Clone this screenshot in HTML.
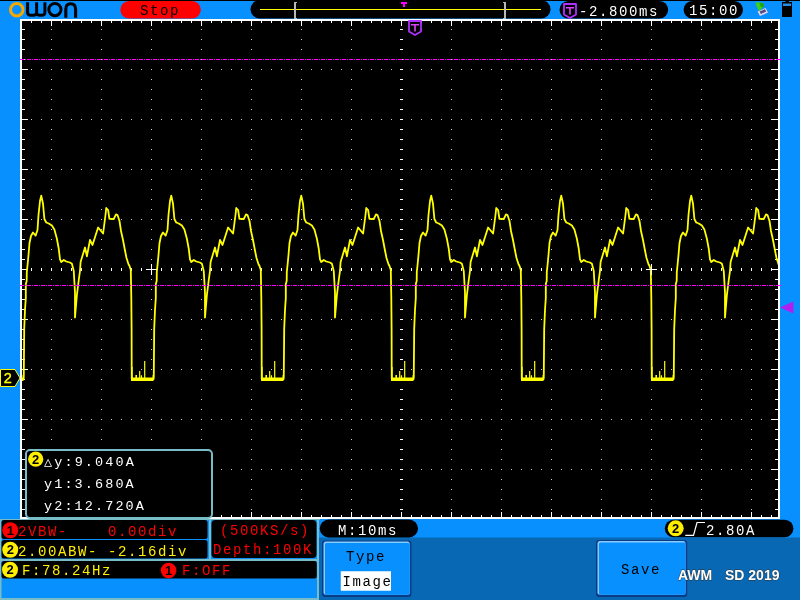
<!DOCTYPE html>
<html><head><meta charset="utf-8"><style>
html,body{margin:0;padding:0;background:#0890ff;width:800px;height:600px;overflow:hidden}
svg{position:absolute;left:0;top:0;display:block;will-change:transform}
text{font-family:"Liberation Mono",monospace;white-space:pre}
</style></head><body>
<svg width="800" height="600" viewBox="0 0 800 600">
<rect x="0" y="0" width="800" height="1" fill="#000"/>
<circle cx="16.75" cy="9.75" r="6.25" fill="none" stroke="#f5a800" stroke-width="3"/>
<path d="M27.6 2.3V12.6Q27.6 15.2 30.2 15.2H34Q36.6 15.2 36.6 12.6V2.3M36.6 12.6Q36.6 15.2 39.2 15.2H42.3Q44.9 15.2 44.9 12.6V2.3" fill="none" stroke="#000" stroke-width="3"/>
<circle cx="54.9" cy="9.6" r="6.1" fill="none" stroke="#000" stroke-width="3"/>
<path d="M65.8 17.7V9.5Q65.8 3.8 70.7 3.8Q75.6 3.8 75.6 9.5V17.7" fill="none" stroke="#000" stroke-width="3.1"/>
<rect x="120.3" y="1" width="80.5" height="17.5" rx="8.75" fill="#ff0000"/>
<text x="140" y="15" fill="#000" font-size="14" letter-spacing="1.6" >Stop</text>
<rect x="250.5" y="0" width="300" height="18.5" rx="9.25" fill="#000"/>
<rect x="260" y="9" width="281" height="1" fill="#ff0"/>
<path d="M294 2h3v1h-1v15h1v1h-3z" fill="#b8b8b8"/>
<path d="M506 2h-3v1h1v15h-1v1h3z" fill="#b8b8b8"/>
<path d="M401 2h6v2h-2v3h-2v-3h-2z" fill="#ff00ff"/>
<rect x="559.5" y="1" width="108.7" height="17.5" rx="8.75" fill="#000"/>
<path d="M564 4h12v10.5l-6 3.5l-6 -3.5z" fill="#000" stroke="#b030ff" stroke-width="1.8" stroke-linejoin="round"/><path d="M566 7h8v1.6h-3.2v6h-1.6v-6h-3.2z" fill="#e040ff"/>
<text x="579" y="16" fill="#fff" font-size="14" letter-spacing="1.6" >-2.800ms</text>
<rect x="683.6" y="1" width="59.4" height="17.5" rx="8.75" fill="#000"/>
<text x="689" y="15" fill="#fff" font-size="14" letter-spacing="1.6" >15:00</text>
<path d="M757.6 11.6L765.6 7.9L768 12.5L760 16Z" fill="#e0d8e8"/><path d="M759.6 11.6L765 9.3L766.2 11.6L760.8 14Z" fill="#584a80"/>
<path d="M755.4 2.2L763 2.8L764 6.6L761.6 8.2L760.2 10.8L758.4 10.2L756.6 6.2Z" fill="#3cd018"/><path d="M759.5 3.2L763.2 3L764 6.6L761.2 7.6Z" fill="#20a010"/>
<rect x="782" y="2" width="10" height="15" fill="#000"/><rect x="785.5" y="0" width="3.5" height="2" fill="#000"/><rect x="783" y="3.5" width="8" height="2.5" fill="#2a8ee0"/>
<rect x="20" y="19" width="760" height="500" fill="#fff"/>
<rect x="22" y="21" width="756" height="496" fill="#000"/>
<path shape-rendering="crispEdges" fill="#d0d0d0" d="M51 29h1v1h-1zM51 39h1v1h-1zM51 49h1v1h-1zM51 59h1v1h-1zM51 69h1v1h-1zM51 79h1v1h-1zM51 89h1v1h-1zM51 99h1v1h-1zM51 109h1v1h-1zM51 119h1v1h-1zM51 129h1v1h-1zM51 139h1v1h-1zM51 149h1v1h-1zM51 159h1v1h-1zM51 169h1v1h-1zM51 179h1v1h-1zM51 189h1v1h-1zM51 199h1v1h-1zM51 209h1v1h-1zM51 219h1v1h-1zM51 229h1v1h-1zM51 239h1v1h-1zM51 249h1v1h-1zM51 259h1v1h-1zM51 269h1v1h-1zM51 279h1v1h-1zM51 289h1v1h-1zM51 299h1v1h-1zM51 309h1v1h-1zM51 319h1v1h-1zM51 329h1v1h-1zM51 339h1v1h-1zM51 349h1v1h-1zM51 359h1v1h-1zM51 369h1v1h-1zM51 379h1v1h-1zM51 389h1v1h-1zM51 399h1v1h-1zM51 409h1v1h-1zM51 419h1v1h-1zM51 429h1v1h-1zM51 439h1v1h-1zM51 449h1v1h-1zM51 459h1v1h-1zM51 469h1v1h-1zM51 479h1v1h-1zM51 489h1v1h-1zM51 499h1v1h-1zM51 509h1v1h-1zM101 29h1v1h-1zM101 39h1v1h-1zM101 49h1v1h-1zM101 59h1v1h-1zM101 69h1v1h-1zM101 79h1v1h-1zM101 89h1v1h-1zM101 99h1v1h-1zM101 109h1v1h-1zM101 119h1v1h-1zM101 129h1v1h-1zM101 139h1v1h-1zM101 149h1v1h-1zM101 159h1v1h-1zM101 169h1v1h-1zM101 179h1v1h-1zM101 189h1v1h-1zM101 199h1v1h-1zM101 209h1v1h-1zM101 219h1v1h-1zM101 229h1v1h-1zM101 239h1v1h-1zM101 249h1v1h-1zM101 259h1v1h-1zM101 269h1v1h-1zM101 279h1v1h-1zM101 289h1v1h-1zM101 299h1v1h-1zM101 309h1v1h-1zM101 319h1v1h-1zM101 329h1v1h-1zM101 339h1v1h-1zM101 349h1v1h-1zM101 359h1v1h-1zM101 369h1v1h-1zM101 379h1v1h-1zM101 389h1v1h-1zM101 399h1v1h-1zM101 409h1v1h-1zM101 419h1v1h-1zM101 429h1v1h-1zM101 439h1v1h-1zM101 449h1v1h-1zM101 459h1v1h-1zM101 469h1v1h-1zM101 479h1v1h-1zM101 489h1v1h-1zM101 499h1v1h-1zM101 509h1v1h-1zM151 29h1v1h-1zM151 39h1v1h-1zM151 49h1v1h-1zM151 59h1v1h-1zM151 69h1v1h-1zM151 79h1v1h-1zM151 89h1v1h-1zM151 99h1v1h-1zM151 109h1v1h-1zM151 119h1v1h-1zM151 129h1v1h-1zM151 139h1v1h-1zM151 149h1v1h-1zM151 159h1v1h-1zM151 169h1v1h-1zM151 179h1v1h-1zM151 189h1v1h-1zM151 199h1v1h-1zM151 209h1v1h-1zM151 219h1v1h-1zM151 229h1v1h-1zM151 239h1v1h-1zM151 249h1v1h-1zM151 259h1v1h-1zM151 269h1v1h-1zM151 279h1v1h-1zM151 289h1v1h-1zM151 299h1v1h-1zM151 309h1v1h-1zM151 319h1v1h-1zM151 329h1v1h-1zM151 339h1v1h-1zM151 349h1v1h-1zM151 359h1v1h-1zM151 369h1v1h-1zM151 379h1v1h-1zM151 389h1v1h-1zM151 399h1v1h-1zM151 409h1v1h-1zM151 419h1v1h-1zM151 429h1v1h-1zM151 439h1v1h-1zM151 449h1v1h-1zM151 459h1v1h-1zM151 469h1v1h-1zM151 479h1v1h-1zM151 489h1v1h-1zM151 499h1v1h-1zM151 509h1v1h-1zM201 29h1v1h-1zM201 39h1v1h-1zM201 49h1v1h-1zM201 59h1v1h-1zM201 69h1v1h-1zM201 79h1v1h-1zM201 89h1v1h-1zM201 99h1v1h-1zM201 109h1v1h-1zM201 119h1v1h-1zM201 129h1v1h-1zM201 139h1v1h-1zM201 149h1v1h-1zM201 159h1v1h-1zM201 169h1v1h-1zM201 179h1v1h-1zM201 189h1v1h-1zM201 199h1v1h-1zM201 209h1v1h-1zM201 219h1v1h-1zM201 229h1v1h-1zM201 239h1v1h-1zM201 249h1v1h-1zM201 259h1v1h-1zM201 269h1v1h-1zM201 279h1v1h-1zM201 289h1v1h-1zM201 299h1v1h-1zM201 309h1v1h-1zM201 319h1v1h-1zM201 329h1v1h-1zM201 339h1v1h-1zM201 349h1v1h-1zM201 359h1v1h-1zM201 369h1v1h-1zM201 379h1v1h-1zM201 389h1v1h-1zM201 399h1v1h-1zM201 409h1v1h-1zM201 419h1v1h-1zM201 429h1v1h-1zM201 439h1v1h-1zM201 449h1v1h-1zM201 459h1v1h-1zM201 469h1v1h-1zM201 479h1v1h-1zM201 489h1v1h-1zM201 499h1v1h-1zM201 509h1v1h-1zM251 29h1v1h-1zM251 39h1v1h-1zM251 49h1v1h-1zM251 59h1v1h-1zM251 69h1v1h-1zM251 79h1v1h-1zM251 89h1v1h-1zM251 99h1v1h-1zM251 109h1v1h-1zM251 119h1v1h-1zM251 129h1v1h-1zM251 139h1v1h-1zM251 149h1v1h-1zM251 159h1v1h-1zM251 169h1v1h-1zM251 179h1v1h-1zM251 189h1v1h-1zM251 199h1v1h-1zM251 209h1v1h-1zM251 219h1v1h-1zM251 229h1v1h-1zM251 239h1v1h-1zM251 249h1v1h-1zM251 259h1v1h-1zM251 269h1v1h-1zM251 279h1v1h-1zM251 289h1v1h-1zM251 299h1v1h-1zM251 309h1v1h-1zM251 319h1v1h-1zM251 329h1v1h-1zM251 339h1v1h-1zM251 349h1v1h-1zM251 359h1v1h-1zM251 369h1v1h-1zM251 379h1v1h-1zM251 389h1v1h-1zM251 399h1v1h-1zM251 409h1v1h-1zM251 419h1v1h-1zM251 429h1v1h-1zM251 439h1v1h-1zM251 449h1v1h-1zM251 459h1v1h-1zM251 469h1v1h-1zM251 479h1v1h-1zM251 489h1v1h-1zM251 499h1v1h-1zM251 509h1v1h-1zM301 29h1v1h-1zM301 39h1v1h-1zM301 49h1v1h-1zM301 59h1v1h-1zM301 69h1v1h-1zM301 79h1v1h-1zM301 89h1v1h-1zM301 99h1v1h-1zM301 109h1v1h-1zM301 119h1v1h-1zM301 129h1v1h-1zM301 139h1v1h-1zM301 149h1v1h-1zM301 159h1v1h-1zM301 169h1v1h-1zM301 179h1v1h-1zM301 189h1v1h-1zM301 199h1v1h-1zM301 209h1v1h-1zM301 219h1v1h-1zM301 229h1v1h-1zM301 239h1v1h-1zM301 249h1v1h-1zM301 259h1v1h-1zM301 269h1v1h-1zM301 279h1v1h-1zM301 289h1v1h-1zM301 299h1v1h-1zM301 309h1v1h-1zM301 319h1v1h-1zM301 329h1v1h-1zM301 339h1v1h-1zM301 349h1v1h-1zM301 359h1v1h-1zM301 369h1v1h-1zM301 379h1v1h-1zM301 389h1v1h-1zM301 399h1v1h-1zM301 409h1v1h-1zM301 419h1v1h-1zM301 429h1v1h-1zM301 439h1v1h-1zM301 449h1v1h-1zM301 459h1v1h-1zM301 469h1v1h-1zM301 479h1v1h-1zM301 489h1v1h-1zM301 499h1v1h-1zM301 509h1v1h-1zM351 29h1v1h-1zM351 39h1v1h-1zM351 49h1v1h-1zM351 59h1v1h-1zM351 69h1v1h-1zM351 79h1v1h-1zM351 89h1v1h-1zM351 99h1v1h-1zM351 109h1v1h-1zM351 119h1v1h-1zM351 129h1v1h-1zM351 139h1v1h-1zM351 149h1v1h-1zM351 159h1v1h-1zM351 169h1v1h-1zM351 179h1v1h-1zM351 189h1v1h-1zM351 199h1v1h-1zM351 209h1v1h-1zM351 219h1v1h-1zM351 229h1v1h-1zM351 239h1v1h-1zM351 249h1v1h-1zM351 259h1v1h-1zM351 269h1v1h-1zM351 279h1v1h-1zM351 289h1v1h-1zM351 299h1v1h-1zM351 309h1v1h-1zM351 319h1v1h-1zM351 329h1v1h-1zM351 339h1v1h-1zM351 349h1v1h-1zM351 359h1v1h-1zM351 369h1v1h-1zM351 379h1v1h-1zM351 389h1v1h-1zM351 399h1v1h-1zM351 409h1v1h-1zM351 419h1v1h-1zM351 429h1v1h-1zM351 439h1v1h-1zM351 449h1v1h-1zM351 459h1v1h-1zM351 469h1v1h-1zM351 479h1v1h-1zM351 489h1v1h-1zM351 499h1v1h-1zM351 509h1v1h-1zM451 29h1v1h-1zM451 39h1v1h-1zM451 49h1v1h-1zM451 59h1v1h-1zM451 69h1v1h-1zM451 79h1v1h-1zM451 89h1v1h-1zM451 99h1v1h-1zM451 109h1v1h-1zM451 119h1v1h-1zM451 129h1v1h-1zM451 139h1v1h-1zM451 149h1v1h-1zM451 159h1v1h-1zM451 169h1v1h-1zM451 179h1v1h-1zM451 189h1v1h-1zM451 199h1v1h-1zM451 209h1v1h-1zM451 219h1v1h-1zM451 229h1v1h-1zM451 239h1v1h-1zM451 249h1v1h-1zM451 259h1v1h-1zM451 269h1v1h-1zM451 279h1v1h-1zM451 289h1v1h-1zM451 299h1v1h-1zM451 309h1v1h-1zM451 319h1v1h-1zM451 329h1v1h-1zM451 339h1v1h-1zM451 349h1v1h-1zM451 359h1v1h-1zM451 369h1v1h-1zM451 379h1v1h-1zM451 389h1v1h-1zM451 399h1v1h-1zM451 409h1v1h-1zM451 419h1v1h-1zM451 429h1v1h-1zM451 439h1v1h-1zM451 449h1v1h-1zM451 459h1v1h-1zM451 469h1v1h-1zM451 479h1v1h-1zM451 489h1v1h-1zM451 499h1v1h-1zM451 509h1v1h-1zM501 29h1v1h-1zM501 39h1v1h-1zM501 49h1v1h-1zM501 59h1v1h-1zM501 69h1v1h-1zM501 79h1v1h-1zM501 89h1v1h-1zM501 99h1v1h-1zM501 109h1v1h-1zM501 119h1v1h-1zM501 129h1v1h-1zM501 139h1v1h-1zM501 149h1v1h-1zM501 159h1v1h-1zM501 169h1v1h-1zM501 179h1v1h-1zM501 189h1v1h-1zM501 199h1v1h-1zM501 209h1v1h-1zM501 219h1v1h-1zM501 229h1v1h-1zM501 239h1v1h-1zM501 249h1v1h-1zM501 259h1v1h-1zM501 269h1v1h-1zM501 279h1v1h-1zM501 289h1v1h-1zM501 299h1v1h-1zM501 309h1v1h-1zM501 319h1v1h-1zM501 329h1v1h-1zM501 339h1v1h-1zM501 349h1v1h-1zM501 359h1v1h-1zM501 369h1v1h-1zM501 379h1v1h-1zM501 389h1v1h-1zM501 399h1v1h-1zM501 409h1v1h-1zM501 419h1v1h-1zM501 429h1v1h-1zM501 439h1v1h-1zM501 449h1v1h-1zM501 459h1v1h-1zM501 469h1v1h-1zM501 479h1v1h-1zM501 489h1v1h-1zM501 499h1v1h-1zM501 509h1v1h-1zM551 29h1v1h-1zM551 39h1v1h-1zM551 49h1v1h-1zM551 59h1v1h-1zM551 69h1v1h-1zM551 79h1v1h-1zM551 89h1v1h-1zM551 99h1v1h-1zM551 109h1v1h-1zM551 119h1v1h-1zM551 129h1v1h-1zM551 139h1v1h-1zM551 149h1v1h-1zM551 159h1v1h-1zM551 169h1v1h-1zM551 179h1v1h-1zM551 189h1v1h-1zM551 199h1v1h-1zM551 209h1v1h-1zM551 219h1v1h-1zM551 229h1v1h-1zM551 239h1v1h-1zM551 249h1v1h-1zM551 259h1v1h-1zM551 269h1v1h-1zM551 279h1v1h-1zM551 289h1v1h-1zM551 299h1v1h-1zM551 309h1v1h-1zM551 319h1v1h-1zM551 329h1v1h-1zM551 339h1v1h-1zM551 349h1v1h-1zM551 359h1v1h-1zM551 369h1v1h-1zM551 379h1v1h-1zM551 389h1v1h-1zM551 399h1v1h-1zM551 409h1v1h-1zM551 419h1v1h-1zM551 429h1v1h-1zM551 439h1v1h-1zM551 449h1v1h-1zM551 459h1v1h-1zM551 469h1v1h-1zM551 479h1v1h-1zM551 489h1v1h-1zM551 499h1v1h-1zM551 509h1v1h-1zM601 29h1v1h-1zM601 39h1v1h-1zM601 49h1v1h-1zM601 59h1v1h-1zM601 69h1v1h-1zM601 79h1v1h-1zM601 89h1v1h-1zM601 99h1v1h-1zM601 109h1v1h-1zM601 119h1v1h-1zM601 129h1v1h-1zM601 139h1v1h-1zM601 149h1v1h-1zM601 159h1v1h-1zM601 169h1v1h-1zM601 179h1v1h-1zM601 189h1v1h-1zM601 199h1v1h-1zM601 209h1v1h-1zM601 219h1v1h-1zM601 229h1v1h-1zM601 239h1v1h-1zM601 249h1v1h-1zM601 259h1v1h-1zM601 269h1v1h-1zM601 279h1v1h-1zM601 289h1v1h-1zM601 299h1v1h-1zM601 309h1v1h-1zM601 319h1v1h-1zM601 329h1v1h-1zM601 339h1v1h-1zM601 349h1v1h-1zM601 359h1v1h-1zM601 369h1v1h-1zM601 379h1v1h-1zM601 389h1v1h-1zM601 399h1v1h-1zM601 409h1v1h-1zM601 419h1v1h-1zM601 429h1v1h-1zM601 439h1v1h-1zM601 449h1v1h-1zM601 459h1v1h-1zM601 469h1v1h-1zM601 479h1v1h-1zM601 489h1v1h-1zM601 499h1v1h-1zM601 509h1v1h-1zM651 29h1v1h-1zM651 39h1v1h-1zM651 49h1v1h-1zM651 59h1v1h-1zM651 69h1v1h-1zM651 79h1v1h-1zM651 89h1v1h-1zM651 99h1v1h-1zM651 109h1v1h-1zM651 119h1v1h-1zM651 129h1v1h-1zM651 139h1v1h-1zM651 149h1v1h-1zM651 159h1v1h-1zM651 169h1v1h-1zM651 179h1v1h-1zM651 189h1v1h-1zM651 199h1v1h-1zM651 209h1v1h-1zM651 219h1v1h-1zM651 229h1v1h-1zM651 239h1v1h-1zM651 249h1v1h-1zM651 259h1v1h-1zM651 269h1v1h-1zM651 279h1v1h-1zM651 289h1v1h-1zM651 299h1v1h-1zM651 309h1v1h-1zM651 319h1v1h-1zM651 329h1v1h-1zM651 339h1v1h-1zM651 349h1v1h-1zM651 359h1v1h-1zM651 369h1v1h-1zM651 379h1v1h-1zM651 389h1v1h-1zM651 399h1v1h-1zM651 409h1v1h-1zM651 419h1v1h-1zM651 429h1v1h-1zM651 439h1v1h-1zM651 449h1v1h-1zM651 459h1v1h-1zM651 469h1v1h-1zM651 479h1v1h-1zM651 489h1v1h-1zM651 499h1v1h-1zM651 509h1v1h-1zM701 29h1v1h-1zM701 39h1v1h-1zM701 49h1v1h-1zM701 59h1v1h-1zM701 69h1v1h-1zM701 79h1v1h-1zM701 89h1v1h-1zM701 99h1v1h-1zM701 109h1v1h-1zM701 119h1v1h-1zM701 129h1v1h-1zM701 139h1v1h-1zM701 149h1v1h-1zM701 159h1v1h-1zM701 169h1v1h-1zM701 179h1v1h-1zM701 189h1v1h-1zM701 199h1v1h-1zM701 209h1v1h-1zM701 219h1v1h-1zM701 229h1v1h-1zM701 239h1v1h-1zM701 249h1v1h-1zM701 259h1v1h-1zM701 269h1v1h-1zM701 279h1v1h-1zM701 289h1v1h-1zM701 299h1v1h-1zM701 309h1v1h-1zM701 319h1v1h-1zM701 329h1v1h-1zM701 339h1v1h-1zM701 349h1v1h-1zM701 359h1v1h-1zM701 369h1v1h-1zM701 379h1v1h-1zM701 389h1v1h-1zM701 399h1v1h-1zM701 409h1v1h-1zM701 419h1v1h-1zM701 429h1v1h-1zM701 439h1v1h-1zM701 449h1v1h-1zM701 459h1v1h-1zM701 469h1v1h-1zM701 479h1v1h-1zM701 489h1v1h-1zM701 499h1v1h-1zM701 509h1v1h-1zM751 29h1v1h-1zM751 39h1v1h-1zM751 49h1v1h-1zM751 59h1v1h-1zM751 69h1v1h-1zM751 79h1v1h-1zM751 89h1v1h-1zM751 99h1v1h-1zM751 109h1v1h-1zM751 119h1v1h-1zM751 129h1v1h-1zM751 139h1v1h-1zM751 149h1v1h-1zM751 159h1v1h-1zM751 169h1v1h-1zM751 179h1v1h-1zM751 189h1v1h-1zM751 199h1v1h-1zM751 209h1v1h-1zM751 219h1v1h-1zM751 229h1v1h-1zM751 239h1v1h-1zM751 249h1v1h-1zM751 259h1v1h-1zM751 269h1v1h-1zM751 279h1v1h-1zM751 289h1v1h-1zM751 299h1v1h-1zM751 309h1v1h-1zM751 319h1v1h-1zM751 329h1v1h-1zM751 339h1v1h-1zM751 349h1v1h-1zM751 359h1v1h-1zM751 369h1v1h-1zM751 379h1v1h-1zM751 389h1v1h-1zM751 399h1v1h-1zM751 409h1v1h-1zM751 419h1v1h-1zM751 429h1v1h-1zM751 439h1v1h-1zM751 449h1v1h-1zM751 459h1v1h-1zM751 469h1v1h-1zM751 479h1v1h-1zM751 489h1v1h-1zM751 499h1v1h-1zM751 509h1v1h-1zM31 69h1v1h-1zM41 69h1v1h-1zM61 69h1v1h-1zM71 69h1v1h-1zM81 69h1v1h-1zM91 69h1v1h-1zM111 69h1v1h-1zM121 69h1v1h-1zM131 69h1v1h-1zM141 69h1v1h-1zM161 69h1v1h-1zM171 69h1v1h-1zM181 69h1v1h-1zM191 69h1v1h-1zM211 69h1v1h-1zM221 69h1v1h-1zM231 69h1v1h-1zM241 69h1v1h-1zM261 69h1v1h-1zM271 69h1v1h-1zM281 69h1v1h-1zM291 69h1v1h-1zM311 69h1v1h-1zM321 69h1v1h-1zM331 69h1v1h-1zM341 69h1v1h-1zM361 69h1v1h-1zM371 69h1v1h-1zM381 69h1v1h-1zM391 69h1v1h-1zM411 69h1v1h-1zM421 69h1v1h-1zM431 69h1v1h-1zM441 69h1v1h-1zM461 69h1v1h-1zM471 69h1v1h-1zM481 69h1v1h-1zM491 69h1v1h-1zM511 69h1v1h-1zM521 69h1v1h-1zM531 69h1v1h-1zM541 69h1v1h-1zM561 69h1v1h-1zM571 69h1v1h-1zM581 69h1v1h-1zM591 69h1v1h-1zM611 69h1v1h-1zM621 69h1v1h-1zM631 69h1v1h-1zM641 69h1v1h-1zM661 69h1v1h-1zM671 69h1v1h-1zM681 69h1v1h-1zM691 69h1v1h-1zM711 69h1v1h-1zM721 69h1v1h-1zM731 69h1v1h-1zM741 69h1v1h-1zM761 69h1v1h-1zM771 69h1v1h-1zM31 119h1v1h-1zM41 119h1v1h-1zM61 119h1v1h-1zM71 119h1v1h-1zM81 119h1v1h-1zM91 119h1v1h-1zM111 119h1v1h-1zM121 119h1v1h-1zM131 119h1v1h-1zM141 119h1v1h-1zM161 119h1v1h-1zM171 119h1v1h-1zM181 119h1v1h-1zM191 119h1v1h-1zM211 119h1v1h-1zM221 119h1v1h-1zM231 119h1v1h-1zM241 119h1v1h-1zM261 119h1v1h-1zM271 119h1v1h-1zM281 119h1v1h-1zM291 119h1v1h-1zM311 119h1v1h-1zM321 119h1v1h-1zM331 119h1v1h-1zM341 119h1v1h-1zM361 119h1v1h-1zM371 119h1v1h-1zM381 119h1v1h-1zM391 119h1v1h-1zM411 119h1v1h-1zM421 119h1v1h-1zM431 119h1v1h-1zM441 119h1v1h-1zM461 119h1v1h-1zM471 119h1v1h-1zM481 119h1v1h-1zM491 119h1v1h-1zM511 119h1v1h-1zM521 119h1v1h-1zM531 119h1v1h-1zM541 119h1v1h-1zM561 119h1v1h-1zM571 119h1v1h-1zM581 119h1v1h-1zM591 119h1v1h-1zM611 119h1v1h-1zM621 119h1v1h-1zM631 119h1v1h-1zM641 119h1v1h-1zM661 119h1v1h-1zM671 119h1v1h-1zM681 119h1v1h-1zM691 119h1v1h-1zM711 119h1v1h-1zM721 119h1v1h-1zM731 119h1v1h-1zM741 119h1v1h-1zM761 119h1v1h-1zM771 119h1v1h-1zM31 169h1v1h-1zM41 169h1v1h-1zM61 169h1v1h-1zM71 169h1v1h-1zM81 169h1v1h-1zM91 169h1v1h-1zM111 169h1v1h-1zM121 169h1v1h-1zM131 169h1v1h-1zM141 169h1v1h-1zM161 169h1v1h-1zM171 169h1v1h-1zM181 169h1v1h-1zM191 169h1v1h-1zM211 169h1v1h-1zM221 169h1v1h-1zM231 169h1v1h-1zM241 169h1v1h-1zM261 169h1v1h-1zM271 169h1v1h-1zM281 169h1v1h-1zM291 169h1v1h-1zM311 169h1v1h-1zM321 169h1v1h-1zM331 169h1v1h-1zM341 169h1v1h-1zM361 169h1v1h-1zM371 169h1v1h-1zM381 169h1v1h-1zM391 169h1v1h-1zM411 169h1v1h-1zM421 169h1v1h-1zM431 169h1v1h-1zM441 169h1v1h-1zM461 169h1v1h-1zM471 169h1v1h-1zM481 169h1v1h-1zM491 169h1v1h-1zM511 169h1v1h-1zM521 169h1v1h-1zM531 169h1v1h-1zM541 169h1v1h-1zM561 169h1v1h-1zM571 169h1v1h-1zM581 169h1v1h-1zM591 169h1v1h-1zM611 169h1v1h-1zM621 169h1v1h-1zM631 169h1v1h-1zM641 169h1v1h-1zM661 169h1v1h-1zM671 169h1v1h-1zM681 169h1v1h-1zM691 169h1v1h-1zM711 169h1v1h-1zM721 169h1v1h-1zM731 169h1v1h-1zM741 169h1v1h-1zM761 169h1v1h-1zM771 169h1v1h-1zM31 219h1v1h-1zM41 219h1v1h-1zM61 219h1v1h-1zM71 219h1v1h-1zM81 219h1v1h-1zM91 219h1v1h-1zM111 219h1v1h-1zM121 219h1v1h-1zM131 219h1v1h-1zM141 219h1v1h-1zM161 219h1v1h-1zM171 219h1v1h-1zM181 219h1v1h-1zM191 219h1v1h-1zM211 219h1v1h-1zM221 219h1v1h-1zM231 219h1v1h-1zM241 219h1v1h-1zM261 219h1v1h-1zM271 219h1v1h-1zM281 219h1v1h-1zM291 219h1v1h-1zM311 219h1v1h-1zM321 219h1v1h-1zM331 219h1v1h-1zM341 219h1v1h-1zM361 219h1v1h-1zM371 219h1v1h-1zM381 219h1v1h-1zM391 219h1v1h-1zM411 219h1v1h-1zM421 219h1v1h-1zM431 219h1v1h-1zM441 219h1v1h-1zM461 219h1v1h-1zM471 219h1v1h-1zM481 219h1v1h-1zM491 219h1v1h-1zM511 219h1v1h-1zM521 219h1v1h-1zM531 219h1v1h-1zM541 219h1v1h-1zM561 219h1v1h-1zM571 219h1v1h-1zM581 219h1v1h-1zM591 219h1v1h-1zM611 219h1v1h-1zM621 219h1v1h-1zM631 219h1v1h-1zM641 219h1v1h-1zM661 219h1v1h-1zM671 219h1v1h-1zM681 219h1v1h-1zM691 219h1v1h-1zM711 219h1v1h-1zM721 219h1v1h-1zM731 219h1v1h-1zM741 219h1v1h-1zM761 219h1v1h-1zM771 219h1v1h-1zM31 319h1v1h-1zM41 319h1v1h-1zM61 319h1v1h-1zM71 319h1v1h-1zM81 319h1v1h-1zM91 319h1v1h-1zM111 319h1v1h-1zM121 319h1v1h-1zM131 319h1v1h-1zM141 319h1v1h-1zM161 319h1v1h-1zM171 319h1v1h-1zM181 319h1v1h-1zM191 319h1v1h-1zM211 319h1v1h-1zM221 319h1v1h-1zM231 319h1v1h-1zM241 319h1v1h-1zM261 319h1v1h-1zM271 319h1v1h-1zM281 319h1v1h-1zM291 319h1v1h-1zM311 319h1v1h-1zM321 319h1v1h-1zM331 319h1v1h-1zM341 319h1v1h-1zM361 319h1v1h-1zM371 319h1v1h-1zM381 319h1v1h-1zM391 319h1v1h-1zM411 319h1v1h-1zM421 319h1v1h-1zM431 319h1v1h-1zM441 319h1v1h-1zM461 319h1v1h-1zM471 319h1v1h-1zM481 319h1v1h-1zM491 319h1v1h-1zM511 319h1v1h-1zM521 319h1v1h-1zM531 319h1v1h-1zM541 319h1v1h-1zM561 319h1v1h-1zM571 319h1v1h-1zM581 319h1v1h-1zM591 319h1v1h-1zM611 319h1v1h-1zM621 319h1v1h-1zM631 319h1v1h-1zM641 319h1v1h-1zM661 319h1v1h-1zM671 319h1v1h-1zM681 319h1v1h-1zM691 319h1v1h-1zM711 319h1v1h-1zM721 319h1v1h-1zM731 319h1v1h-1zM741 319h1v1h-1zM761 319h1v1h-1zM771 319h1v1h-1zM31 369h1v1h-1zM41 369h1v1h-1zM61 369h1v1h-1zM71 369h1v1h-1zM81 369h1v1h-1zM91 369h1v1h-1zM111 369h1v1h-1zM121 369h1v1h-1zM131 369h1v1h-1zM141 369h1v1h-1zM161 369h1v1h-1zM171 369h1v1h-1zM181 369h1v1h-1zM191 369h1v1h-1zM211 369h1v1h-1zM221 369h1v1h-1zM231 369h1v1h-1zM241 369h1v1h-1zM261 369h1v1h-1zM271 369h1v1h-1zM281 369h1v1h-1zM291 369h1v1h-1zM311 369h1v1h-1zM321 369h1v1h-1zM331 369h1v1h-1zM341 369h1v1h-1zM361 369h1v1h-1zM371 369h1v1h-1zM381 369h1v1h-1zM391 369h1v1h-1zM411 369h1v1h-1zM421 369h1v1h-1zM431 369h1v1h-1zM441 369h1v1h-1zM461 369h1v1h-1zM471 369h1v1h-1zM481 369h1v1h-1zM491 369h1v1h-1zM511 369h1v1h-1zM521 369h1v1h-1zM531 369h1v1h-1zM541 369h1v1h-1zM561 369h1v1h-1zM571 369h1v1h-1zM581 369h1v1h-1zM591 369h1v1h-1zM611 369h1v1h-1zM621 369h1v1h-1zM631 369h1v1h-1zM641 369h1v1h-1zM661 369h1v1h-1zM671 369h1v1h-1zM681 369h1v1h-1zM691 369h1v1h-1zM711 369h1v1h-1zM721 369h1v1h-1zM731 369h1v1h-1zM741 369h1v1h-1zM761 369h1v1h-1zM771 369h1v1h-1zM31 419h1v1h-1zM41 419h1v1h-1zM61 419h1v1h-1zM71 419h1v1h-1zM81 419h1v1h-1zM91 419h1v1h-1zM111 419h1v1h-1zM121 419h1v1h-1zM131 419h1v1h-1zM141 419h1v1h-1zM161 419h1v1h-1zM171 419h1v1h-1zM181 419h1v1h-1zM191 419h1v1h-1zM211 419h1v1h-1zM221 419h1v1h-1zM231 419h1v1h-1zM241 419h1v1h-1zM261 419h1v1h-1zM271 419h1v1h-1zM281 419h1v1h-1zM291 419h1v1h-1zM311 419h1v1h-1zM321 419h1v1h-1zM331 419h1v1h-1zM341 419h1v1h-1zM361 419h1v1h-1zM371 419h1v1h-1zM381 419h1v1h-1zM391 419h1v1h-1zM411 419h1v1h-1zM421 419h1v1h-1zM431 419h1v1h-1zM441 419h1v1h-1zM461 419h1v1h-1zM471 419h1v1h-1zM481 419h1v1h-1zM491 419h1v1h-1zM511 419h1v1h-1zM521 419h1v1h-1zM531 419h1v1h-1zM541 419h1v1h-1zM561 419h1v1h-1zM571 419h1v1h-1zM581 419h1v1h-1zM591 419h1v1h-1zM611 419h1v1h-1zM621 419h1v1h-1zM631 419h1v1h-1zM641 419h1v1h-1zM661 419h1v1h-1zM671 419h1v1h-1zM681 419h1v1h-1zM691 419h1v1h-1zM711 419h1v1h-1zM721 419h1v1h-1zM731 419h1v1h-1zM741 419h1v1h-1zM761 419h1v1h-1zM771 419h1v1h-1zM31 469h1v1h-1zM41 469h1v1h-1zM61 469h1v1h-1zM71 469h1v1h-1zM81 469h1v1h-1zM91 469h1v1h-1zM111 469h1v1h-1zM121 469h1v1h-1zM131 469h1v1h-1zM141 469h1v1h-1zM161 469h1v1h-1zM171 469h1v1h-1zM181 469h1v1h-1zM191 469h1v1h-1zM211 469h1v1h-1zM221 469h1v1h-1zM231 469h1v1h-1zM241 469h1v1h-1zM261 469h1v1h-1zM271 469h1v1h-1zM281 469h1v1h-1zM291 469h1v1h-1zM311 469h1v1h-1zM321 469h1v1h-1zM331 469h1v1h-1zM341 469h1v1h-1zM361 469h1v1h-1zM371 469h1v1h-1zM381 469h1v1h-1zM391 469h1v1h-1zM411 469h1v1h-1zM421 469h1v1h-1zM431 469h1v1h-1zM441 469h1v1h-1zM461 469h1v1h-1zM471 469h1v1h-1zM481 469h1v1h-1zM491 469h1v1h-1zM511 469h1v1h-1zM521 469h1v1h-1zM531 469h1v1h-1zM541 469h1v1h-1zM561 469h1v1h-1zM571 469h1v1h-1zM581 469h1v1h-1zM591 469h1v1h-1zM611 469h1v1h-1zM621 469h1v1h-1zM631 469h1v1h-1zM641 469h1v1h-1zM661 469h1v1h-1zM671 469h1v1h-1zM681 469h1v1h-1zM691 469h1v1h-1zM711 469h1v1h-1zM721 469h1v1h-1zM731 469h1v1h-1zM741 469h1v1h-1zM761 469h1v1h-1zM771 469h1v1h-1z"/>
<path shape-rendering="crispEdges" fill="#fff" d="M400 29h3v1h-3zM400 39h3v1h-3zM400 49h3v1h-3zM400 59h3v1h-3zM400 69h3v1h-3zM400 79h3v1h-3zM400 89h3v1h-3zM400 99h3v1h-3zM400 109h3v1h-3zM400 119h3v1h-3zM400 129h3v1h-3zM400 139h3v1h-3zM400 149h3v1h-3zM400 159h3v1h-3zM400 169h3v1h-3zM400 179h3v1h-3zM400 189h3v1h-3zM400 199h3v1h-3zM400 209h3v1h-3zM400 219h3v1h-3zM400 229h3v1h-3zM400 239h3v1h-3zM400 249h3v1h-3zM400 259h3v1h-3zM400 269h3v1h-3zM400 279h3v1h-3zM400 289h3v1h-3zM400 299h3v1h-3zM400 309h3v1h-3zM400 319h3v1h-3zM400 329h3v1h-3zM400 339h3v1h-3zM400 349h3v1h-3zM400 359h3v1h-3zM400 369h3v1h-3zM400 379h3v1h-3zM400 389h3v1h-3zM400 399h3v1h-3zM400 409h3v1h-3zM400 419h3v1h-3zM400 429h3v1h-3zM400 439h3v1h-3zM400 449h3v1h-3zM400 459h3v1h-3zM400 469h3v1h-3zM400 479h3v1h-3zM400 489h3v1h-3zM400 499h3v1h-3zM400 509h3v1h-3zM31 268h1v3h-1zM41 268h1v3h-1zM51 268h1v3h-1zM61 268h1v3h-1zM71 268h1v3h-1zM81 268h1v3h-1zM91 268h1v3h-1zM101 268h1v3h-1zM111 268h1v3h-1zM121 268h1v3h-1zM131 268h1v3h-1zM141 268h1v3h-1zM151 268h1v3h-1zM161 268h1v3h-1zM171 268h1v3h-1zM181 268h1v3h-1zM191 268h1v3h-1zM201 268h1v3h-1zM211 268h1v3h-1zM221 268h1v3h-1zM231 268h1v3h-1zM241 268h1v3h-1zM251 268h1v3h-1zM261 268h1v3h-1zM271 268h1v3h-1zM281 268h1v3h-1zM291 268h1v3h-1zM301 268h1v3h-1zM311 268h1v3h-1zM321 268h1v3h-1zM331 268h1v3h-1zM341 268h1v3h-1zM351 268h1v3h-1zM361 268h1v3h-1zM371 268h1v3h-1zM381 268h1v3h-1zM391 268h1v3h-1zM401 268h1v3h-1zM411 268h1v3h-1zM421 268h1v3h-1zM431 268h1v3h-1zM441 268h1v3h-1zM451 268h1v3h-1zM461 268h1v3h-1zM471 268h1v3h-1zM481 268h1v3h-1zM491 268h1v3h-1zM501 268h1v3h-1zM511 268h1v3h-1zM521 268h1v3h-1zM531 268h1v3h-1zM541 268h1v3h-1zM551 268h1v3h-1zM561 268h1v3h-1zM571 268h1v3h-1zM581 268h1v3h-1zM591 268h1v3h-1zM601 268h1v3h-1zM611 268h1v3h-1zM621 268h1v3h-1zM631 268h1v3h-1zM641 268h1v3h-1zM651 268h1v3h-1zM661 268h1v3h-1zM671 268h1v3h-1zM681 268h1v3h-1zM691 268h1v3h-1zM701 268h1v3h-1zM711 268h1v3h-1zM721 268h1v3h-1zM731 268h1v3h-1zM741 268h1v3h-1zM751 268h1v3h-1zM761 268h1v3h-1zM771 268h1v3h-1zM400 269h3v1h-3zM401 268h1v3h-1zM31 21h1v2h-1zM31 515h1v2h-1zM41 21h1v2h-1zM41 515h1v2h-1zM51 21h1v5h-1zM51 512h1v5h-1zM61 21h1v2h-1zM61 515h1v2h-1zM71 21h1v2h-1zM71 515h1v2h-1zM81 21h1v2h-1zM81 515h1v2h-1zM91 21h1v2h-1zM91 515h1v2h-1zM101 21h1v5h-1zM101 512h1v5h-1zM111 21h1v2h-1zM111 515h1v2h-1zM121 21h1v2h-1zM121 515h1v2h-1zM131 21h1v2h-1zM131 515h1v2h-1zM141 21h1v2h-1zM141 515h1v2h-1zM151 21h1v5h-1zM151 512h1v5h-1zM161 21h1v2h-1zM161 515h1v2h-1zM171 21h1v2h-1zM171 515h1v2h-1zM181 21h1v2h-1zM181 515h1v2h-1zM191 21h1v2h-1zM191 515h1v2h-1zM201 21h1v5h-1zM201 512h1v5h-1zM211 21h1v2h-1zM211 515h1v2h-1zM221 21h1v2h-1zM221 515h1v2h-1zM231 21h1v2h-1zM231 515h1v2h-1zM241 21h1v2h-1zM241 515h1v2h-1zM251 21h1v5h-1zM251 512h1v5h-1zM261 21h1v2h-1zM261 515h1v2h-1zM271 21h1v2h-1zM271 515h1v2h-1zM281 21h1v2h-1zM281 515h1v2h-1zM291 21h1v2h-1zM291 515h1v2h-1zM301 21h1v5h-1zM301 512h1v5h-1zM311 21h1v2h-1zM311 515h1v2h-1zM321 21h1v2h-1zM321 515h1v2h-1zM331 21h1v2h-1zM331 515h1v2h-1zM341 21h1v2h-1zM341 515h1v2h-1zM351 21h1v5h-1zM351 512h1v5h-1zM361 21h1v2h-1zM361 515h1v2h-1zM371 21h1v2h-1zM371 515h1v2h-1zM381 21h1v2h-1zM381 515h1v2h-1zM391 21h1v2h-1zM391 515h1v2h-1zM401 21h1v5h-1zM401 512h1v5h-1zM411 21h1v2h-1zM411 515h1v2h-1zM421 21h1v2h-1zM421 515h1v2h-1zM431 21h1v2h-1zM431 515h1v2h-1zM441 21h1v2h-1zM441 515h1v2h-1zM451 21h1v5h-1zM451 512h1v5h-1zM461 21h1v2h-1zM461 515h1v2h-1zM471 21h1v2h-1zM471 515h1v2h-1zM481 21h1v2h-1zM481 515h1v2h-1zM491 21h1v2h-1zM491 515h1v2h-1zM501 21h1v5h-1zM501 512h1v5h-1zM511 21h1v2h-1zM511 515h1v2h-1zM521 21h1v2h-1zM521 515h1v2h-1zM531 21h1v2h-1zM531 515h1v2h-1zM541 21h1v2h-1zM541 515h1v2h-1zM551 21h1v5h-1zM551 512h1v5h-1zM561 21h1v2h-1zM561 515h1v2h-1zM571 21h1v2h-1zM571 515h1v2h-1zM581 21h1v2h-1zM581 515h1v2h-1zM591 21h1v2h-1zM591 515h1v2h-1zM601 21h1v5h-1zM601 512h1v5h-1zM611 21h1v2h-1zM611 515h1v2h-1zM621 21h1v2h-1zM621 515h1v2h-1zM631 21h1v2h-1zM631 515h1v2h-1zM641 21h1v2h-1zM641 515h1v2h-1zM651 21h1v5h-1zM651 512h1v5h-1zM661 21h1v2h-1zM661 515h1v2h-1zM671 21h1v2h-1zM671 515h1v2h-1zM681 21h1v2h-1zM681 515h1v2h-1zM691 21h1v2h-1zM691 515h1v2h-1zM701 21h1v5h-1zM701 512h1v5h-1zM711 21h1v2h-1zM711 515h1v2h-1zM721 21h1v2h-1zM721 515h1v2h-1zM731 21h1v2h-1zM731 515h1v2h-1zM741 21h1v2h-1zM741 515h1v2h-1zM751 21h1v5h-1zM751 512h1v5h-1zM761 21h1v2h-1zM761 515h1v2h-1zM771 21h1v2h-1zM771 515h1v2h-1zM22 29h3v1h-3zM775 29h3v1h-3zM22 39h3v1h-3zM775 39h3v1h-3zM22 49h3v1h-3zM775 49h3v1h-3zM22 59h3v1h-3zM775 59h3v1h-3zM22 69h6v1h-6zM771 69h7v1h-7zM22 79h3v1h-3zM775 79h3v1h-3zM22 89h3v1h-3zM775 89h3v1h-3zM22 99h3v1h-3zM775 99h3v1h-3zM22 109h3v1h-3zM775 109h3v1h-3zM22 119h6v1h-6zM771 119h7v1h-7zM22 129h3v1h-3zM775 129h3v1h-3zM22 139h3v1h-3zM775 139h3v1h-3zM22 149h3v1h-3zM775 149h3v1h-3zM22 159h3v1h-3zM775 159h3v1h-3zM22 169h6v1h-6zM771 169h7v1h-7zM22 179h3v1h-3zM775 179h3v1h-3zM22 189h3v1h-3zM775 189h3v1h-3zM22 199h3v1h-3zM775 199h3v1h-3zM22 209h3v1h-3zM775 209h3v1h-3zM22 219h6v1h-6zM771 219h7v1h-7zM22 229h3v1h-3zM775 229h3v1h-3zM22 239h3v1h-3zM775 239h3v1h-3zM22 249h3v1h-3zM775 249h3v1h-3zM22 259h3v1h-3zM775 259h3v1h-3zM22 269h6v1h-6zM771 269h7v1h-7zM22 279h3v1h-3zM775 279h3v1h-3zM22 289h3v1h-3zM775 289h3v1h-3zM22 299h3v1h-3zM775 299h3v1h-3zM22 309h3v1h-3zM775 309h3v1h-3zM22 319h6v1h-6zM771 319h7v1h-7zM22 329h3v1h-3zM775 329h3v1h-3zM22 339h3v1h-3zM775 339h3v1h-3zM22 349h3v1h-3zM775 349h3v1h-3zM22 359h3v1h-3zM775 359h3v1h-3zM22 369h6v1h-6zM771 369h7v1h-7zM22 379h3v1h-3zM775 379h3v1h-3zM22 389h3v1h-3zM775 389h3v1h-3zM22 399h3v1h-3zM775 399h3v1h-3zM22 409h3v1h-3zM775 409h3v1h-3zM22 419h6v1h-6zM771 419h7v1h-7zM22 429h3v1h-3zM775 429h3v1h-3zM22 439h3v1h-3zM775 439h3v1h-3zM22 449h3v1h-3zM775 449h3v1h-3zM22 459h3v1h-3zM775 459h3v1h-3zM22 469h6v1h-6zM771 469h7v1h-7zM22 479h3v1h-3zM775 479h3v1h-3zM22 489h3v1h-3zM775 489h3v1h-3zM22 499h3v1h-3zM775 499h3v1h-3zM22 509h3v1h-3zM775 509h3v1h-3z"/>
<clipPath id="gclip"><rect x="22" y="21" width="756" height="496"/></clipPath>
<g clip-path="url(#gclip)"><polyline points="-0.80,265.00 0.80,270.00 1.30,298.00 1.60,330.00 1.70,367.50 1.75,379.00 12.00,379.00 23.60,379.00 23.80,374.00 24.20,329.00 25.00,310.00 25.80,298.00 25.80,284.00 26.70,281.00 26.80,272.00 27.50,265.50 28.50,255.00 29.50,243.00 31.00,236.00 33.00,232.50 35.60,235.60 37.50,230.00 38.50,215.00 40.00,201.00 41.25,195.60 43.00,203.75 44.40,219.00 46.25,222.50 48.75,223.50 51.90,225.60 54.40,229.40 56.90,238.75 58.75,248.75 60.00,259.40 61.25,262.00 63.75,260.00 66.25,261.50 70.00,262.50 71.90,263.75 73.75,271.00 75.00,292.50 75.00,317.50 76.90,295.00 78.75,280.00 80.00,271.00 80.60,262.00 85.00,247.50 86.90,256.25 90.00,240.00 92.50,245.00 98.10,227.50 103.10,233.50 105.50,215.00 106.25,208.00 108.10,210.00 109.40,218.75 113.75,219.00 116.00,214.40 117.50,215.00 119.50,221.00 121.00,231.00 123.00,240.00 124.50,248.00 126.50,258.00 128.75,265.00 129.20,265.00 130.80,270.00 131.30,298.00 131.60,330.00 131.70,367.50 131.75,379.00 142.00,379.00 153.60,379.00 153.80,374.00 154.20,329.00 155.00,310.00 155.80,298.00 155.80,284.00 156.70,281.00 156.80,272.00 157.50,265.50 158.50,255.00 159.50,243.00 161.00,236.00 163.00,232.50 165.60,235.60 167.50,230.00 168.50,215.00 170.00,201.00 171.25,195.60 173.00,203.75 174.40,219.00 176.25,222.50 178.75,223.50 181.90,225.60 184.40,229.40 186.90,238.75 188.75,248.75 190.00,259.40 191.25,262.00 193.75,260.00 196.25,261.50 200.00,262.50 201.90,263.75 203.75,271.00 205.00,292.50 205.00,317.50 206.90,295.00 208.75,280.00 210.00,271.00 210.60,262.00 215.00,247.50 216.90,256.25 220.00,240.00 222.50,245.00 228.10,227.50 233.10,233.50 235.50,215.00 236.25,208.00 238.10,210.00 239.40,218.75 243.75,219.00 246.00,214.40 247.50,215.00 249.50,221.00 251.00,231.00 253.00,240.00 254.50,248.00 256.50,258.00 258.75,265.00 259.20,265.00 260.80,270.00 261.30,298.00 261.60,330.00 261.70,367.50 261.75,379.00 272.00,379.00 283.60,379.00 283.80,374.00 284.20,329.00 285.00,310.00 285.80,298.00 285.80,284.00 286.70,281.00 286.80,272.00 287.50,265.50 288.50,255.00 289.50,243.00 291.00,236.00 293.00,232.50 295.60,235.60 297.50,230.00 298.50,215.00 300.00,201.00 301.25,195.60 303.00,203.75 304.40,219.00 306.25,222.50 308.75,223.50 311.90,225.60 314.40,229.40 316.90,238.75 318.75,248.75 320.00,259.40 321.25,262.00 323.75,260.00 326.25,261.50 330.00,262.50 331.90,263.75 333.75,271.00 335.00,292.50 335.00,317.50 336.90,295.00 338.75,280.00 340.00,271.00 340.60,262.00 345.00,247.50 346.90,256.25 350.00,240.00 352.50,245.00 358.10,227.50 363.10,233.50 365.50,215.00 366.25,208.00 368.10,210.00 369.40,218.75 373.75,219.00 376.00,214.40 377.50,215.00 379.50,221.00 381.00,231.00 383.00,240.00 384.50,248.00 386.50,258.00 388.75,265.00 389.20,265.00 390.80,270.00 391.30,298.00 391.60,330.00 391.70,367.50 391.75,379.00 402.00,379.00 413.60,379.00 413.80,374.00 414.20,329.00 415.00,310.00 415.80,298.00 415.80,284.00 416.70,281.00 416.80,272.00 417.50,265.50 418.50,255.00 419.50,243.00 421.00,236.00 423.00,232.50 425.60,235.60 427.50,230.00 428.50,215.00 430.00,201.00 431.25,195.60 433.00,203.75 434.40,219.00 436.25,222.50 438.75,223.50 441.90,225.60 444.40,229.40 446.90,238.75 448.75,248.75 450.00,259.40 451.25,262.00 453.75,260.00 456.25,261.50 460.00,262.50 461.90,263.75 463.75,271.00 465.00,292.50 465.00,317.50 466.90,295.00 468.75,280.00 470.00,271.00 470.60,262.00 475.00,247.50 476.90,256.25 480.00,240.00 482.50,245.00 488.10,227.50 493.10,233.50 495.50,215.00 496.25,208.00 498.10,210.00 499.40,218.75 503.75,219.00 506.00,214.40 507.50,215.00 509.50,221.00 511.00,231.00 513.00,240.00 514.50,248.00 516.50,258.00 518.75,265.00 519.20,265.00 520.80,270.00 521.30,298.00 521.60,330.00 521.70,367.50 521.75,379.00 532.00,379.00 543.60,379.00 543.80,374.00 544.20,329.00 545.00,310.00 545.80,298.00 545.80,284.00 546.70,281.00 546.80,272.00 547.50,265.50 548.50,255.00 549.50,243.00 551.00,236.00 553.00,232.50 555.60,235.60 557.50,230.00 558.50,215.00 560.00,201.00 561.25,195.60 563.00,203.75 564.40,219.00 566.25,222.50 568.75,223.50 571.90,225.60 574.40,229.40 576.90,238.75 578.75,248.75 580.00,259.40 581.25,262.00 583.75,260.00 586.25,261.50 590.00,262.50 591.90,263.75 593.75,271.00 595.00,292.50 595.00,317.50 596.90,295.00 598.75,280.00 600.00,271.00 600.60,262.00 605.00,247.50 606.90,256.25 610.00,240.00 612.50,245.00 618.10,227.50 623.10,233.50 625.50,215.00 626.25,208.00 628.10,210.00 629.40,218.75 633.75,219.00 636.00,214.40 637.50,215.00 639.50,221.00 641.00,231.00 643.00,240.00 644.50,248.00 646.50,258.00 648.75,265.00 649.20,265.00 650.80,270.00 651.30,298.00 651.60,330.00 651.70,367.50 651.75,379.00 662.00,379.00 673.60,379.00 673.80,374.00 674.20,329.00 675.00,310.00 675.80,298.00 675.80,284.00 676.70,281.00 676.80,272.00 677.50,265.50 678.50,255.00 679.50,243.00 681.00,236.00 683.00,232.50 685.60,235.60 687.50,230.00 688.50,215.00 690.00,201.00 691.25,195.60 693.00,203.75 694.40,219.00 696.25,222.50 698.75,223.50 701.90,225.60 704.40,229.40 706.90,238.75 708.75,248.75 710.00,259.40 711.25,262.00 713.75,260.00 716.25,261.50 720.00,262.50 721.90,263.75 723.75,271.00 725.00,292.50 725.00,317.50 726.90,295.00 728.75,280.00 730.00,271.00 730.60,262.00 735.00,247.50 736.90,256.25 740.00,240.00 742.50,245.00 748.10,227.50 753.10,233.50 755.50,215.00 756.25,208.00 758.10,210.00 759.40,218.75 763.75,219.00 766.00,214.40 767.50,215.00 769.50,221.00 771.00,231.00 773.00,240.00 774.50,248.00 776.50,258.00 778.75,265.00" fill="none" stroke="#ff0" stroke-width="1.8" stroke-linejoin="round"/><path fill="#ff0" d="M1 377.5h22.5v3.5h-22.5zM1.1999999999999886 367h1.4v11h-1.4zM5.400000000000006 375h1.6v3h-1.6zM9.099999999999994 371h1.2v7h-1.2zM10.900000000000006 375.3h1.2v3h-1.2zM14.099999999999994 361h1.2v17h-1.2zM22.599999999999994 375h1.6v3h-1.6zM131 377.5h22.5v3.5h-22.5zM131.2 367h1.4v11h-1.4zM135.4 375h1.6v3h-1.6zM139.1 371h1.2v7h-1.2zM140.9 375.3h1.2v3h-1.2zM144.1 361h1.2v17h-1.2zM152.6 375h1.6v3h-1.6zM261 377.5h22.5v3.5h-22.5zM261.2 367h1.4v11h-1.4zM265.4 375h1.6v3h-1.6zM269.1 371h1.2v7h-1.2zM270.9 375.3h1.2v3h-1.2zM274.1 361h1.2v17h-1.2zM282.6 375h1.6v3h-1.6zM391 377.5h22.5v3.5h-22.5zM391.2 367h1.4v11h-1.4zM395.4 375h1.6v3h-1.6zM399.1 371h1.2v7h-1.2zM400.9 375.3h1.2v3h-1.2zM404.1 361h1.2v17h-1.2zM412.6 375h1.6v3h-1.6zM521 377.5h22.5v3.5h-22.5zM521.2 367h1.4v11h-1.4zM525.4 375h1.6v3h-1.6zM529.1 371h1.2v7h-1.2zM530.9 375.3h1.2v3h-1.2zM534.1 361h1.2v17h-1.2zM542.6 375h1.6v3h-1.6zM651 377.5h22.5v3.5h-22.5zM651.2 367h1.4v11h-1.4zM655.4 375h1.6v3h-1.6zM659.1 371h1.2v7h-1.2zM660.9 375.3h1.2v3h-1.2zM664.1 361h1.2v17h-1.2zM672.6 375h1.6v3h-1.6z"/></g>
<path fill="#ff00ff" d="M20 59h4v1h-4zM25 59h1v1h-1zM27 59h4v1h-4zM32 59h1v1h-1zM34 59h4v1h-4zM39 59h1v1h-1zM41 59h4v1h-4zM46 59h1v1h-1zM48 59h4v1h-4zM53 59h1v1h-1zM55 59h4v1h-4zM60 59h1v1h-1zM62 59h4v1h-4zM67 59h1v1h-1zM69 59h4v1h-4zM74 59h1v1h-1zM76 59h4v1h-4zM81 59h1v1h-1zM83 59h4v1h-4zM88 59h1v1h-1zM90 59h4v1h-4zM95 59h1v1h-1zM97 59h4v1h-4zM102 59h1v1h-1zM104 59h4v1h-4zM109 59h1v1h-1zM111 59h4v1h-4zM116 59h1v1h-1zM118 59h4v1h-4zM123 59h1v1h-1zM125 59h4v1h-4zM130 59h1v1h-1zM132 59h4v1h-4zM137 59h1v1h-1zM139 59h4v1h-4zM144 59h1v1h-1zM146 59h4v1h-4zM151 59h1v1h-1zM153 59h4v1h-4zM158 59h1v1h-1zM160 59h4v1h-4zM165 59h1v1h-1zM167 59h4v1h-4zM172 59h1v1h-1zM174 59h4v1h-4zM179 59h1v1h-1zM181 59h4v1h-4zM186 59h1v1h-1zM188 59h4v1h-4zM193 59h1v1h-1zM195 59h4v1h-4zM200 59h1v1h-1zM202 59h4v1h-4zM207 59h1v1h-1zM209 59h4v1h-4zM214 59h1v1h-1zM216 59h4v1h-4zM221 59h1v1h-1zM223 59h4v1h-4zM228 59h1v1h-1zM230 59h4v1h-4zM235 59h1v1h-1zM237 59h4v1h-4zM242 59h1v1h-1zM244 59h4v1h-4zM249 59h1v1h-1zM251 59h4v1h-4zM256 59h1v1h-1zM258 59h4v1h-4zM263 59h1v1h-1zM265 59h4v1h-4zM270 59h1v1h-1zM272 59h4v1h-4zM277 59h1v1h-1zM279 59h4v1h-4zM284 59h1v1h-1zM286 59h4v1h-4zM291 59h1v1h-1zM293 59h4v1h-4zM298 59h1v1h-1zM300 59h4v1h-4zM305 59h1v1h-1zM307 59h4v1h-4zM312 59h1v1h-1zM314 59h4v1h-4zM319 59h1v1h-1zM321 59h4v1h-4zM326 59h1v1h-1zM328 59h4v1h-4zM333 59h1v1h-1zM335 59h4v1h-4zM340 59h1v1h-1zM342 59h4v1h-4zM347 59h1v1h-1zM349 59h4v1h-4zM354 59h1v1h-1zM356 59h4v1h-4zM361 59h1v1h-1zM363 59h4v1h-4zM368 59h1v1h-1zM370 59h4v1h-4zM375 59h1v1h-1zM377 59h4v1h-4zM382 59h1v1h-1zM384 59h4v1h-4zM389 59h1v1h-1zM391 59h4v1h-4zM396 59h1v1h-1zM398 59h4v1h-4zM403 59h1v1h-1zM405 59h4v1h-4zM410 59h1v1h-1zM412 59h4v1h-4zM417 59h1v1h-1zM419 59h4v1h-4zM424 59h1v1h-1zM426 59h4v1h-4zM431 59h1v1h-1zM433 59h4v1h-4zM438 59h1v1h-1zM440 59h4v1h-4zM445 59h1v1h-1zM447 59h4v1h-4zM452 59h1v1h-1zM454 59h4v1h-4zM459 59h1v1h-1zM461 59h4v1h-4zM466 59h1v1h-1zM468 59h4v1h-4zM473 59h1v1h-1zM475 59h4v1h-4zM480 59h1v1h-1zM482 59h4v1h-4zM487 59h1v1h-1zM489 59h4v1h-4zM494 59h1v1h-1zM496 59h4v1h-4zM501 59h1v1h-1zM503 59h4v1h-4zM508 59h1v1h-1zM510 59h4v1h-4zM515 59h1v1h-1zM517 59h4v1h-4zM522 59h1v1h-1zM524 59h4v1h-4zM529 59h1v1h-1zM531 59h4v1h-4zM536 59h1v1h-1zM538 59h4v1h-4zM543 59h1v1h-1zM545 59h4v1h-4zM550 59h1v1h-1zM552 59h4v1h-4zM557 59h1v1h-1zM559 59h4v1h-4zM564 59h1v1h-1zM566 59h4v1h-4zM571 59h1v1h-1zM573 59h4v1h-4zM578 59h1v1h-1zM580 59h4v1h-4zM585 59h1v1h-1zM587 59h4v1h-4zM592 59h1v1h-1zM594 59h4v1h-4zM599 59h1v1h-1zM601 59h4v1h-4zM606 59h1v1h-1zM608 59h4v1h-4zM613 59h1v1h-1zM615 59h4v1h-4zM620 59h1v1h-1zM622 59h4v1h-4zM627 59h1v1h-1zM629 59h4v1h-4zM634 59h1v1h-1zM636 59h4v1h-4zM641 59h1v1h-1zM643 59h4v1h-4zM648 59h1v1h-1zM650 59h4v1h-4zM655 59h1v1h-1zM657 59h4v1h-4zM662 59h1v1h-1zM664 59h4v1h-4zM669 59h1v1h-1zM671 59h4v1h-4zM676 59h1v1h-1zM678 59h4v1h-4zM683 59h1v1h-1zM685 59h4v1h-4zM690 59h1v1h-1zM692 59h4v1h-4zM697 59h1v1h-1zM699 59h4v1h-4zM704 59h1v1h-1zM706 59h4v1h-4zM711 59h1v1h-1zM713 59h4v1h-4zM718 59h1v1h-1zM720 59h4v1h-4zM725 59h1v1h-1zM727 59h4v1h-4zM732 59h1v1h-1zM734 59h4v1h-4zM739 59h1v1h-1zM741 59h4v1h-4zM746 59h1v1h-1zM748 59h4v1h-4zM753 59h1v1h-1zM755 59h4v1h-4zM760 59h1v1h-1zM762 59h4v1h-4zM767 59h1v1h-1zM769 59h4v1h-4zM774 59h1v1h-1zM776 59h4v1h-4zM781 59h1v1h-1z"/>
<path fill="#ff00ff" d="M20 285h4v1h-4zM25 285h1v1h-1zM27 285h4v1h-4zM32 285h1v1h-1zM34 285h4v1h-4zM39 285h1v1h-1zM41 285h4v1h-4zM46 285h1v1h-1zM48 285h4v1h-4zM53 285h1v1h-1zM55 285h4v1h-4zM60 285h1v1h-1zM62 285h4v1h-4zM67 285h1v1h-1zM69 285h4v1h-4zM74 285h1v1h-1zM76 285h4v1h-4zM81 285h1v1h-1zM83 285h4v1h-4zM88 285h1v1h-1zM90 285h4v1h-4zM95 285h1v1h-1zM97 285h4v1h-4zM102 285h1v1h-1zM104 285h4v1h-4zM109 285h1v1h-1zM111 285h4v1h-4zM116 285h1v1h-1zM118 285h4v1h-4zM123 285h1v1h-1zM125 285h4v1h-4zM130 285h1v1h-1zM132 285h4v1h-4zM137 285h1v1h-1zM139 285h4v1h-4zM144 285h1v1h-1zM146 285h4v1h-4zM151 285h1v1h-1zM153 285h4v1h-4zM158 285h1v1h-1zM160 285h4v1h-4zM165 285h1v1h-1zM167 285h4v1h-4zM172 285h1v1h-1zM174 285h4v1h-4zM179 285h1v1h-1zM181 285h4v1h-4zM186 285h1v1h-1zM188 285h4v1h-4zM193 285h1v1h-1zM195 285h4v1h-4zM200 285h1v1h-1zM202 285h4v1h-4zM207 285h1v1h-1zM209 285h4v1h-4zM214 285h1v1h-1zM216 285h4v1h-4zM221 285h1v1h-1zM223 285h4v1h-4zM228 285h1v1h-1zM230 285h4v1h-4zM235 285h1v1h-1zM237 285h4v1h-4zM242 285h1v1h-1zM244 285h4v1h-4zM249 285h1v1h-1zM251 285h4v1h-4zM256 285h1v1h-1zM258 285h4v1h-4zM263 285h1v1h-1zM265 285h4v1h-4zM270 285h1v1h-1zM272 285h4v1h-4zM277 285h1v1h-1zM279 285h4v1h-4zM284 285h1v1h-1zM286 285h4v1h-4zM291 285h1v1h-1zM293 285h4v1h-4zM298 285h1v1h-1zM300 285h4v1h-4zM305 285h1v1h-1zM307 285h4v1h-4zM312 285h1v1h-1zM314 285h4v1h-4zM319 285h1v1h-1zM321 285h4v1h-4zM326 285h1v1h-1zM328 285h4v1h-4zM333 285h1v1h-1zM335 285h4v1h-4zM340 285h1v1h-1zM342 285h4v1h-4zM347 285h1v1h-1zM349 285h4v1h-4zM354 285h1v1h-1zM356 285h4v1h-4zM361 285h1v1h-1zM363 285h4v1h-4zM368 285h1v1h-1zM370 285h4v1h-4zM375 285h1v1h-1zM377 285h4v1h-4zM382 285h1v1h-1zM384 285h4v1h-4zM389 285h1v1h-1zM391 285h4v1h-4zM396 285h1v1h-1zM398 285h4v1h-4zM403 285h1v1h-1zM405 285h4v1h-4zM410 285h1v1h-1zM412 285h4v1h-4zM417 285h1v1h-1zM419 285h4v1h-4zM424 285h1v1h-1zM426 285h4v1h-4zM431 285h1v1h-1zM433 285h4v1h-4zM438 285h1v1h-1zM440 285h4v1h-4zM445 285h1v1h-1zM447 285h4v1h-4zM452 285h1v1h-1zM454 285h4v1h-4zM459 285h1v1h-1zM461 285h4v1h-4zM466 285h1v1h-1zM468 285h4v1h-4zM473 285h1v1h-1zM475 285h4v1h-4zM480 285h1v1h-1zM482 285h4v1h-4zM487 285h1v1h-1zM489 285h4v1h-4zM494 285h1v1h-1zM496 285h4v1h-4zM501 285h1v1h-1zM503 285h4v1h-4zM508 285h1v1h-1zM510 285h4v1h-4zM515 285h1v1h-1zM517 285h4v1h-4zM522 285h1v1h-1zM524 285h4v1h-4zM529 285h1v1h-1zM531 285h4v1h-4zM536 285h1v1h-1zM538 285h4v1h-4zM543 285h1v1h-1zM545 285h4v1h-4zM550 285h1v1h-1zM552 285h4v1h-4zM557 285h1v1h-1zM559 285h4v1h-4zM564 285h1v1h-1zM566 285h4v1h-4zM571 285h1v1h-1zM573 285h4v1h-4zM578 285h1v1h-1zM580 285h4v1h-4zM585 285h1v1h-1zM587 285h4v1h-4zM592 285h1v1h-1zM594 285h4v1h-4zM599 285h1v1h-1zM601 285h4v1h-4zM606 285h1v1h-1zM608 285h4v1h-4zM613 285h1v1h-1zM615 285h4v1h-4zM620 285h1v1h-1zM622 285h4v1h-4zM627 285h1v1h-1zM629 285h4v1h-4zM634 285h1v1h-1zM636 285h4v1h-4zM641 285h1v1h-1zM643 285h4v1h-4zM648 285h1v1h-1zM650 285h4v1h-4zM655 285h1v1h-1zM657 285h4v1h-4zM662 285h1v1h-1zM664 285h4v1h-4zM669 285h1v1h-1zM671 285h4v1h-4zM676 285h1v1h-1zM678 285h4v1h-4zM683 285h1v1h-1zM685 285h4v1h-4zM690 285h1v1h-1zM692 285h4v1h-4zM697 285h1v1h-1zM699 285h4v1h-4zM704 285h1v1h-1zM706 285h4v1h-4zM711 285h1v1h-1zM713 285h4v1h-4zM718 285h1v1h-1zM720 285h4v1h-4zM725 285h1v1h-1zM727 285h4v1h-4zM732 285h1v1h-1zM734 285h4v1h-4zM739 285h1v1h-1zM741 285h4v1h-4zM746 285h1v1h-1zM748 285h4v1h-4zM753 285h1v1h-1zM755 285h4v1h-4zM760 285h1v1h-1zM762 285h4v1h-4zM767 285h1v1h-1zM769 285h4v1h-4zM774 285h1v1h-1zM776 285h4v1h-4zM781 285h1v1h-1z"/>
<path d="M146 269h11v1h-11zM151 264h1v11h-1zM646 269h11v1h-11zM651 264h1v11h-1z" fill="#fff"/>
<path d="M409 21h12v10.5l-6 3.5l-6 -3.5z" fill="#000" stroke="#b030ff" stroke-width="1.8" stroke-linejoin="round"/><path d="M411 24h8v1.6h-3.2v6h-1.6v-6h-3.2z" fill="#e040ff"/>
<path d="M0.5 369.5H15L20 378L15 386.5H0.5Z" fill="#000" stroke="#ff0" stroke-width="1"/>
<text x="3.8" y="383.2" fill="#ff0" stroke="#ff0" stroke-width="0.35" style="font-family:Liberation Sans;font-size:14.5px">2</text>
<path d="M780 307.5L793.5 301.5V313.5Z" fill="#b020f0"/>
<rect x="26" y="450" width="186" height="68" rx="4" fill="#000" stroke="#78bcc8" stroke-width="2"/>
<circle cx="35.7" cy="459.2" r="7.6" fill="#ffee00"/><text x="35.7" y="463.8" fill="#000" text-anchor="middle" style="font-family:'Liberation Sans';font-weight:bold;font-size:13px">2</text>
<text x="44" y="465.5" fill="#fff" font-size="13.5" letter-spacing="2.1" >△y:9.040A</text>
<text x="44" y="488" fill="#fff" font-size="13.5" letter-spacing="2.1" >y1:3.680A</text>
<text x="44" y="510" fill="#fff" font-size="13.5" letter-spacing="2.1" >y2:12.720A</text>
<rect x="0" y="519" width="800" height="81" fill="#0890ff"/>
<rect x="319" y="537.5" width="481" height="62.5" fill="#0868b4"/>
<path fill="#78bcc8" d="M0 519h320v1h-320zM0 519h1.5v81h-1.5zM209 519h2v41h-2zM317 519h2v81h-2zM0 559h318v2h-318zM0 598h319v2h-319z"/>
<rect x="1.5" y="520" width="206" height="19" rx="2.5" fill="#000"/>
<rect x="1.5" y="540" width="206" height="18.5" rx="2.5" fill="#000"/>
<rect x="211.5" y="520" width="105" height="38" rx="4" fill="#000"/>
<rect x="1.5" y="561" width="315.25" height="17.6" rx="2.5" fill="#000"/>
<circle cx="10.25" cy="530.25" r="8" fill="#ff0000"/><text x="10.25" y="534.85" fill="#000" text-anchor="middle" style="font-family:'Liberation Sans';font-weight:bold;font-size:13px">1</text>
<circle cx="10.25" cy="549.75" r="8" fill="#ffee00"/><text x="10.25" y="554.35" fill="#000" text-anchor="middle" style="font-family:'Liberation Sans';font-weight:bold;font-size:13px">2</text>
<circle cx="10.0" cy="569.75" r="8" fill="#ffee00"/><text x="10.0" y="574.35" fill="#000" text-anchor="middle" style="font-family:'Liberation Sans';font-weight:bold;font-size:13px">2</text>
<circle cx="168.6" cy="570.5" r="7.8" fill="#ff0000"/><text x="168.6" y="575.1" fill="#000" text-anchor="middle" style="font-family:'Liberation Sans';font-weight:bold;font-size:13px">1</text>
<text x="18" y="536" fill="#ff0000" font-size="14" letter-spacing="1.6" >2VBW-    0.00div</text>
<text x="18" y="556" fill="#ffee00" font-size="14" letter-spacing="1.6" >2.00ABW- -2.16div</text>
<text x="22" y="575" fill="#ffee00" font-size="14" letter-spacing="1.6" >F:78.24Hz</text>
<text x="182" y="575" fill="#ff0000" font-size="14" letter-spacing="1.6" >F:OFF</text>
<text x="220" y="534.5" fill="#ff0000" font-size="14" letter-spacing="1.6" >(500KS/s)</text>
<text x="213" y="554" fill="#ff0000" font-size="14" letter-spacing="1.6" >Depth:100K</text>
<rect x="319.75" y="519.5" width="98.25" height="18" rx="9" fill="#000"/>
<text x="338" y="534.5" fill="#fff" font-size="14" letter-spacing="1.6" >M:10ms</text>
<rect x="664.8" y="519.7" width="128.6" height="17.6" rx="8.8" fill="#000"/>
<circle cx="675.7" cy="528.3" r="8" fill="#ffee00"/><text x="675.7" y="532.9" fill="#000" text-anchor="middle" style="font-family:'Liberation Sans';font-weight:bold;font-size:13px">2</text>
<path d="M685.3 535.4H693.5L697 522.5H705" fill="none" stroke="#fff" stroke-width="1.2"/>
<text x="706" y="535" fill="#fff" font-size="14" letter-spacing="1.6" >2.80A</text>
<rect x="322" y="540.5" width="89.5" height="56.5" rx="3" fill="#083c88"/><rect x="323.5" y="541.5" width="86.25" height="53.25" rx="2.5" fill="#88ccff"/><rect x="325" y="543.0" width="84.75" height="51.75" rx="1.5" fill="#0890ff"/>
<text x="346" y="561" fill="#000" font-size="14" letter-spacing="1.6" >Type</text>
<rect x="340.75" y="571.25" width="50.25" height="19.5" fill="#fff"/>
<text x="342.5" y="585.7" fill="#000" font-size="14" letter-spacing="1.6" >Image</text>
<rect x="596" y="540" width="91.25" height="57" rx="3" fill="#083c88"/><rect x="597.5" y="541" width="88.0" height="53.75" rx="2.5" fill="#88ccff"/><rect x="599" y="542.5" width="86.5" height="52.25" rx="1.5" fill="#0890ff"/>
<text x="621" y="574" fill="#000" font-size="14" letter-spacing="1.6" >Save</text>
<text x="678" y="580" style="font-family:'Liberation Sans';font-weight:bold;font-size:14px" fill="#fff" stroke="#303030" stroke-width="0.8" paint-order="stroke">AWM</text><text x="725" y="580" style="font-family:'Liberation Sans';font-weight:bold;font-size:14px" fill="#fff" stroke="#303030" stroke-width="0.8" paint-order="stroke">SD 2019</text>
</svg></body></html>
